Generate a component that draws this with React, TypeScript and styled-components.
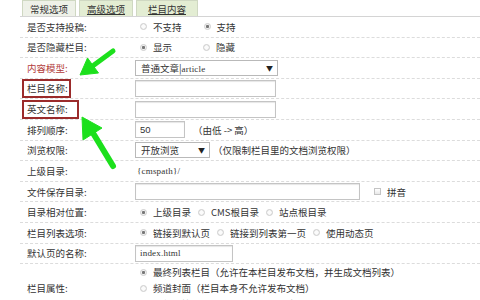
import React from 'react';
import styled, { createGlobalStyle } from 'styled-components';

const GlobalStyle = createGlobalStyle`
  html, body {
    margin: 0;
    padding: 0;
    background: #fff;
  }
`;

const Page = styled.div`
  position: relative;
  width: 480px;
  height: 300px;
  overflow: hidden;
  padding-left: 20px;
  box-sizing: border-box;
  font-family: "Noto Sans CJK SC", "Liberation Sans", sans-serif;
  font-size: 9.5px;
  color: #333;
`;

const TabBar = styled.div`
  display: flex;
  align-items: flex-end;
  gap: 3px;
  padding-left: 2px;
  height: 16px;
  border-bottom: 1px solid #d4d4d4;
`;

const Tab = styled.div<{ $active?: boolean; $width: number }>`
  width: ${({ $width }) => $width}px;
  height: 16px;
  display: flex;
  align-items: center;
  justify-content: center;
  box-sizing: border-box;
  border: 1px solid #cfd8c2;
  border-bottom: none;
  background: ${({ $active }) => ($active ? '#eef1e8' : '#e3edd3')};
  color: #333;
  text-decoration: ${({ $active }) => ($active ? 'none' : 'underline')};
`;

const Row = styled.div<{ $tall?: boolean }>`
  display: flex;
  align-items: center;
  height: ${({ $tall }) => ($tall ? 'auto' : '20.6px')};
  box-sizing: border-box;
  border-bottom: 1px dashed #dcdcdc;
`;

const Label = styled.div<{ $red?: boolean }>`
  width: 115px;
  flex-shrink: 0;
  padding-left: 7px;
  box-sizing: border-box;
  color: ${({ $red }) => ($red ? '#b23b3b' : '#333')};
  white-space: nowrap;
`;

const Boxed = styled.span<{ $extra: number }>`
  display: inline-block;
  margin-left: -5px;
  padding: 2px ${({ $extra }) => $extra}px 2px 3px;
  border: 2px solid #9b2b2b;
  line-height: 11px;
`;

const Value = styled.div<{ $gap?: number }>`
  display: flex;
  align-items: center;
  gap: ${({ $gap }) => $gap ?? 6}px;
  white-space: nowrap;
`;

const Stack = styled.div`
  display: flex;
  flex-direction: column;
`;

const Option = styled.label`
  display: flex;
  align-items: center;
  gap: 6px;
  height: 16px;
`;

const RadioDot = styled.span<{ $on?: boolean }>`
  width: 7px;
  height: 7px;
  margin-left: 5px;
  border-radius: 50%;
  box-sizing: border-box;
  border: 1px solid #cdcdcd;
  background: ${({ $on }) =>
    $on
      ? 'radial-gradient(circle, #777 0 1.3px, #f1f1f1 1.8px)'
      : 'radial-gradient(circle, #fbfbfb 0 1.5px, #e4e4e4 3.5px)'};
`;

const CheckBox = styled.span`
  width: 7px;
  height: 7px;
  margin-left: 8px;
  box-sizing: border-box;
  border: 1px solid #c4c4c4;
  background: linear-gradient(#fff, #e8e8e8);
`;

const TextInput = styled.div<{ $width: number }>`
  width: ${({ $width }) => $width}px;
  height: 17px;
  box-sizing: border-box;
  border: 1px solid #c4c4c4;
  box-shadow: inset 0 1px 1px #e6e6e6;
  display: flex;
  align-items: center;
  padding-left: 4px;
  font-family: "Liberation Sans", "Noto Sans CJK SC", sans-serif;
`;

const Mono = styled.span`
  font-family: "Liberation Serif", "DejaVu Serif", serif;
  font-size: 9px;
  letter-spacing: 0.2px;
`;

const Select = styled.div<{ $width: number }>`
  width: ${({ $width }) => $width}px;
  height: 16px;
  box-sizing: border-box;
  border: 1px solid #b9b9b9;
  background: #fff;
  display: flex;
  align-items: center;
  justify-content: space-between;
  padding: 0 4px 0 5px;
`;

const Caret = styled.span`
  font-size: 7px;
  color: #222;
`;

const Hint = styled.span`
  margin-left: 2px;
`;

const Arrows = styled.svg`
  position: absolute;
  left: 0;
  top: 0;
  pointer-events: none;
`;

function Radio({ on, children }: { on?: boolean; children: React.ReactNode }) {
  return (
    <Option>
      <RadioDot $on={on} />
      <span>{children}</span>
    </Option>
  );
}

export default function App() {
  return (
    <>
      <GlobalStyle />
      <Page>
        <TabBar>
          <Tab $active $width={54}>常规选项</Tab>
          <Tab $width={54}>高级选项</Tab>
          <Tab $width={62}>栏目内容</Tab>
        </TabBar>

        <Row>
          <Label>是否支持投稿:</Label>
          <Value $gap={17}>
            <Radio>不支持</Radio>
            <Radio on>支持</Radio>
          </Value>
        </Row>
        <Row>
          <Label>是否隐藏栏目:</Label>
          <Value $gap={26}>
            <Radio on>显示</Radio>
            <Radio>隐藏</Radio>
          </Value>
        </Row>
        <Row>
          <Label $red>内容模型:</Label>
          <Select $width={143}>
            <span>普通文章|<Mono>article</Mono></span>
            <Caret>▼</Caret>
          </Select>
        </Row>
        <Row>
          <Label>
            <Boxed $extra={1}>栏目名称:</Boxed>
          </Label>
          <TextInput $width={141} />
        </Row>
        <Row>
          <Label>
            <Boxed $extra={9}>英文名称:</Boxed>
          </Label>
          <TextInput $width={141} />
        </Row>
        <Row>
          <Label>排列顺序:</Label>
          <Value>
            <TextInput $width={50}>50</TextInput>
            <Hint>（由低 -&gt; 高）</Hint>
          </Value>
        </Row>
        <Row>
          <Label>浏览权限:</Label>
          <Value $gap={3}>
            <Select $width={75}>
              <span>开放浏览</span>
              <Caret>▼</Caret>
            </Select>
            <span>（仅限制栏目里的文档浏览权限）</span>
          </Value>
        </Row>
        <Row>
          <Label>上级目录:</Label>
          <Value>
            <Mono style={{ marginLeft: 2 }}>{'{cmspath}/'}</Mono>
          </Value>
        </Row>
        <Row>
          <Label>文件保存目录:</Label>
          <Value>
            <TextInput $width={225} />
            <CheckBox />
            <span>拼音</span>
          </Value>
        </Row>
        <Row>
          <Label>目录相对位置:</Label>
          <Value $gap={2}>
            <Radio on>上级目录</Radio>
            <Radio>CMS根目录</Radio>
            <Radio>站点根目录</Radio>
          </Value>
        </Row>
        <Row>
          <Label>栏目列表选项:</Label>
          <Value $gap={2}>
            <Radio on>链接到默认页</Radio>
            <Radio>链接到列表第一页</Radio>
            <Radio>使用动态页</Radio>
          </Value>
        </Row>
        <Row>
          <Label>默认页的名称:</Label>
          <TextInput $width={98}>
            <Mono>index.html</Mono>
          </TextInput>
        </Row>
        <Row $tall>
          <Label>栏目属性:</Label>
          <Stack>
            <Radio on>最终列表栏目（允许在本栏目发布文档，并生成文档列表）</Radio>
            <Radio>频道封面（栏目本身不允许发布文档）</Radio>
            <Radio>外部连接（在"栏目列表选项"处填写网址）</Radio>
          </Stack>
        </Row>

        <Arrows width="480" height="300" viewBox="0 0 480 300">
          <defs>
            <filter id="soft" x="-20%" y="-20%" width="140%" height="140%">
              <feGaussianBlur stdDeviation="0.6" />
            </filter>
          </defs>
          <g fill="#1fe01f" stroke="#1fe01f" strokeLinejoin="round" filter="url(#soft)">
            <line x1="113" y1="51" x2="94" y2="65" strokeWidth="5" strokeLinecap="round" />
            <polygon points="80,75 98.5,73 87.5,58" strokeWidth="1" />
            <line x1="113" y1="166" x2="93" y2="133" strokeWidth="6" strokeLinecap="round" />
            <polygon points="82,117 102,128 83,140" strokeWidth="1" />
          </g>
        </Arrows>
      </Page>
    </>
  );
}
